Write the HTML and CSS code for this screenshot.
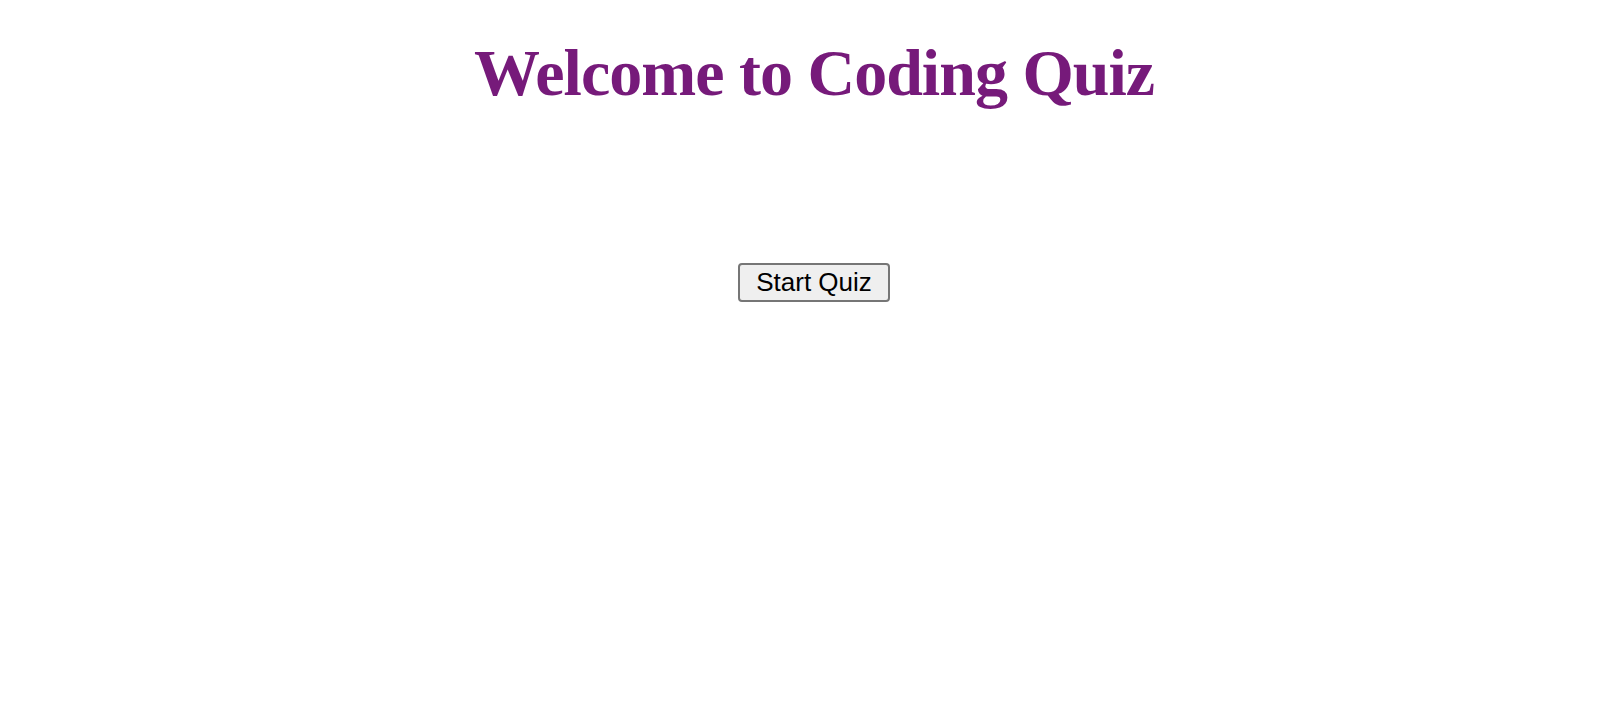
FILE: index.html
```html
<!DOCTYPE html>
<html>
<head>
<meta charset="utf-8">
<link rel="stylesheet" href="styles.css">
</head>
<body>
<main class="page">
  <h1 class="title">Welcome to Coding Quiz</h1>
  <div class="actions">
    <button class="start-btn">Start Quiz</button>
  </div>
</main>
</body>
</html>
```
FILE: styles.css
```css
html, body {
  margin: 0;
  padding: 0;
  background: #ffffff;
}
.page {
  display: flex;
  flex-direction: column;
  align-items: center;
  padding-top: 35px;
  padding-left: 12px;
}
.title {
  margin: 0;
  font-family: "Liberation Serif", "Times New Roman", serif;
  font-weight: bold;
  font-size: 66px;
  line-height: 76px;
  letter-spacing: -1px;
  color: #761a7a;
}
.actions {
  margin-top: 152px;
}
.start-btn {
  font-family: "Liberation Sans", Arial, sans-serif;
  font-size: 26px;
  line-height: 29px;
  color: #000;
  background: #efefef;
  border: 2px solid #767676;
  border-radius: 4px;
  padding: 3px 16px;
}
```
